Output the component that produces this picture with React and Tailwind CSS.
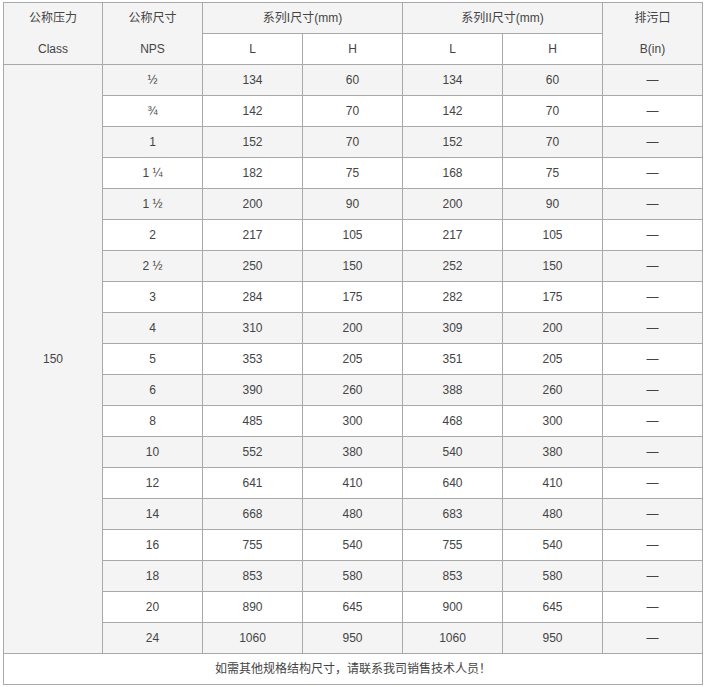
// 150 磅级尺寸表：用 grid + gap-px 画出 1px 表格线
const ROWS = [
  ["½", "134", "60", "134", "60"],
  ["¾", "142", "70", "142", "70"],
  ["1", "152", "70", "152", "70"],
  ["1 ¼", "182", "75", "168", "75"],
  ["1 ½", "200", "90", "200", "90"],
  ["2", "217", "105", "217", "105"],
  ["2 ½", "250", "150", "252", "150"],
  ["3", "284", "175", "282", "175"],
  ["4", "310", "200", "309", "200"],
  ["5", "353", "205", "351", "205"],
  ["6", "390", "260", "388", "260"],
  ["8", "485", "300", "468", "300"],
  ["10", "552", "380", "540", "380"],
  ["12", "641", "410", "640", "410"],
  ["14", "668", "480", "683", "480"],
  ["16", "755", "540", "755", "540"],
  ["18", "853", "580", "853", "580"],
  ["20", "890", "645", "900", "645"],
  ["24", "1060", "950", "1060", "950"],
];

const cell = "flex items-center justify-center";

export default function App() {
  return (
    <div className="min-h-[687px] bg-white pl-[3px] pt-[2px] font-['Liberation_Sans','Noto_Sans_CJK_SC',sans-serif] text-[12px] text-[#444]">
      <div className="grid w-[700px] grid-cols-[98px_99px_99px_99px_99px_99px_99px] auto-rows-[30px] gap-px bg-[#a9a9a9] p-px">
        {/* 表头 */}
        <div className={`${cell} row-span-2 flex-col bg-[#f4f4f4]`}>
          <div className="leading-[31px]">公称压力</div>
          <div className="leading-[31px]">Class</div>
        </div>
        <div className={`${cell} row-span-2 flex-col bg-[#f4f4f4]`}>
          <div className="leading-[31px]">公称尺寸</div>
          <div className="leading-[31px]">NPS</div>
        </div>
        <div className={`${cell} col-span-2 bg-[#f4f4f4]`}>系列I尺寸(mm)</div>
        <div className={`${cell} col-span-2 bg-[#f4f4f4]`}>系列II尺寸(mm)</div>
        <div className={`${cell} row-span-2 flex-col bg-[#f4f4f4]`}>
          <div className="leading-[31px]">排污口</div>
          <div className="leading-[31px]">B(in)</div>
        </div>
        <div className={`${cell} bg-white`}>L</div>
        <div className={`${cell} bg-white`}>H</div>
        <div className={`${cell} bg-white`}>L</div>
        <div className={`${cell} bg-white`}>H</div>

        {/* 数据行，第一列 150 跨 19 行 */}
        <div className={`${cell} row-span-19 bg-[#f4f4f4]`}>150</div>
        {ROWS.map((row, i) => {
          const bg = i % 2 === 0 ? "bg-[#f4f4f4]" : "bg-white";
          return [
            ...row.map((v, j) => (
              <div key={`${i}-${j}`} className={`${cell} ${bg}`}>
                {v}
              </div>
            )),
            <div key={`${i}-d`} className={`${cell} ${bg}`}>
              —
            </div>,
          ];
        })}

        <div className={`${cell} col-span-7 bg-white`}>如需其他规格结构尺寸，请联系我司销售技术人员！</div>
      </div>
    </div>
  );
}
